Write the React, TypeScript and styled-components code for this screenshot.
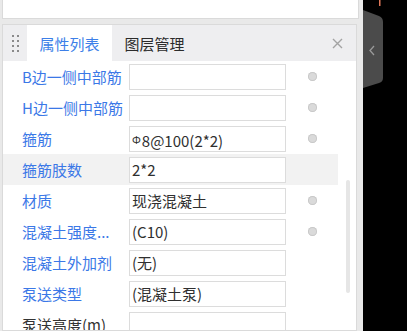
import * as React from "react";
import styled, { createGlobalStyle } from "styled-components";

const GlobalStyle = createGlobalStyle`
  html, body {
    margin: 0;
    padding: 0;
    background: #e9e9e9;
    overflow: hidden;
  }
  body {
    font-family: "Noto Sans CJK SC", "Noto Sans", sans-serif;
  }
`;

const SPage = styled.div`
  display: flex;
  width: 407px;
  height: 331px;
`;

const SLeft = styled.div`
  width: 363px;
  padding-left: 2px;
  box-sizing: border-box;
  display: flex;
  flex-direction: column;
`;

const STopBox = styled.div`
  width: 355px;
  height: 18px;
  flex: 0 0 auto;
  background: #fff;
  border: 1px solid #dadada;
  border-top: none;
`;

const SPanel = styled.div`
  position: relative;
  margin-top: 5px;
  width: 355px;
  flex: 1 1 auto;
  box-sizing: border-box;
  background: #fff;
  border: 1px solid #dadada;
  overflow: hidden;
`;

const SHeader = styled.div`
  display: flex;
  height: 36px;
  background: #eeeef0;
`;

const SGrip = styled.div`
  width: 24px;
  display: grid;
  grid-template-columns: 2px 2px;
  grid-auto-rows: 2px;
  column-gap: 3px;
  row-gap: 3px;
  align-content: center;
  justify-content: center;
  padding-top: 1px;
  box-sizing: border-box;

  span {
    background: #8a8a8a;
  }
`;

interface ITab {
  active?: boolean;
}

const STab = styled.div<ITab>`
  width: 85px;
  display: flex;
  align-items: center;
  justify-content: center;
  font-size: 15px;
  color: ${(props) => (props.active ? "#3d7fe8" : "#2b2b2b")};
  background: ${(props) => (props.active ? "#fff" : "transparent")};
`;

const SClose = styled.div`
  margin-left: auto;
  width: 36px;
  display: flex;
  align-items: center;
  justify-content: center;
  margin-right: 1px;
`;

const SRow = styled.div<ITab>`
  display: flex;
  align-items: center;
  width: 335px;
  height: 31px;
  background: ${(props) => (props.active ? "#f2f2f2" : "transparent")};
`;

interface ILabel {
  plain?: boolean;
}

const SLabel = styled.div<ILabel>`
  width: 126px;
  padding-left: 19px;
  box-sizing: border-box;
  font-size: 15px;
  white-space: nowrap;
  color: ${(props) => (props.plain ? "#333" : "#3b78e7")};
`;

const SInput = styled.div`
  width: 157px;
  height: 26px;
  box-sizing: border-box;
  border: 1px solid #dcdcdc;
  background: #fff;
  padding-left: 2px;
  font-size: 15px;
  line-height: 24px;
  color: #2f2f2f;
  white-space: nowrap;
  overflow: hidden;
`;

const SBar = styled.span`
  font-size: 11px;
  vertical-align: 3px;
  margin-right: 1px;
`;

const SDotCell = styled.div`
  flex: 1;
  display: flex;
  justify-content: center;
`;

const SDot = styled.span`
  width: 9px;
  height: 9px;
  border-radius: 50%;
  background: #dadada;
  box-shadow: inset 0 0 0 1px #c9c9c9;
`;

const SScroll = styled.div`
  position: absolute;
  left: 343px;
  top: 155px;
  width: 4px;
  height: 113px;
  border-radius: 2px;
  background: #e6e6e6;
`;

const SDark = styled.div`
  flex: 1;
  position: relative;
  background: #000;
`;

const SSideTab = styled.svg`
  position: absolute;
  left: 0;
  top: 0;
`;

const rows = [
  { label: "B边一侧中部筋", value: "", dot: true },
  { label: "H边一侧中部筋", value: "", dot: true },
  { label: "箍筋", value: "8@100(2*2)", bar: true, dot: true },
  { label: "箍筋肢数", value: "2*2", active: true },
  { label: "材质", value: "现浇混凝土", dot: true },
  { label: "混凝土强度...", value: "(C10)", dot: true },
  { label: "混凝土外加剂", value: "(无)" },
  { label: "泵送类型", value: "(混凝土泵)" },
  { label: "泵送高度(m)", value: "", plain: true },
];

const App = () => {
  return (
    <SPage>
      <GlobalStyle />
      <SLeft>
        <STopBox />
        <SPanel>
          <SHeader>
            <SGrip>
              {Array.from({ length: 8 }).map((_, i) => (
                <span key={i} />
              ))}
            </SGrip>
            <STab active>属性列表</STab>
            <STab>图层管理</STab>
            <SClose>
              <svg width="11" height="11" viewBox="0 0 11 11">
                <path
                  d="M1 1L10 10M10 1L1 10"
                  stroke="#a3a3a3"
                  strokeWidth="1.4"
                />
              </svg>
            </SClose>
          </SHeader>
          {rows.map((row) => (
            <SRow key={row.label} active={row.active}>
              <SLabel plain={row.plain}>{row.label}</SLabel>
              <SInput>
                {row.bar && <SBar>Φ</SBar>}
                {row.value}
              </SInput>
              <SDotCell>{row.dot && <SDot />}</SDotCell>
            </SRow>
          ))}
          <SScroll />
        </SPanel>
      </SLeft>
      <SDark>
        <SSideTab width="44" height="331" viewBox="0 0 44 331">
          <path
            d="M0 10 L16 16 Q20 17.5 20 22 L20 78 Q20 82 16 83 L0 88 Z"
            fill="#4b4b4b"
          />
          <path
            d="M11 46 L7 50.5 L11 55"
            fill="none"
            stroke="#9a9a9a"
            strokeWidth="1.3"
          />
          <rect x="16" y="0" width="1.5" height="6" fill="#e0785a" />
        </SSideTab>
      </SDark>
    </SPage>
  );
};

export default App;
